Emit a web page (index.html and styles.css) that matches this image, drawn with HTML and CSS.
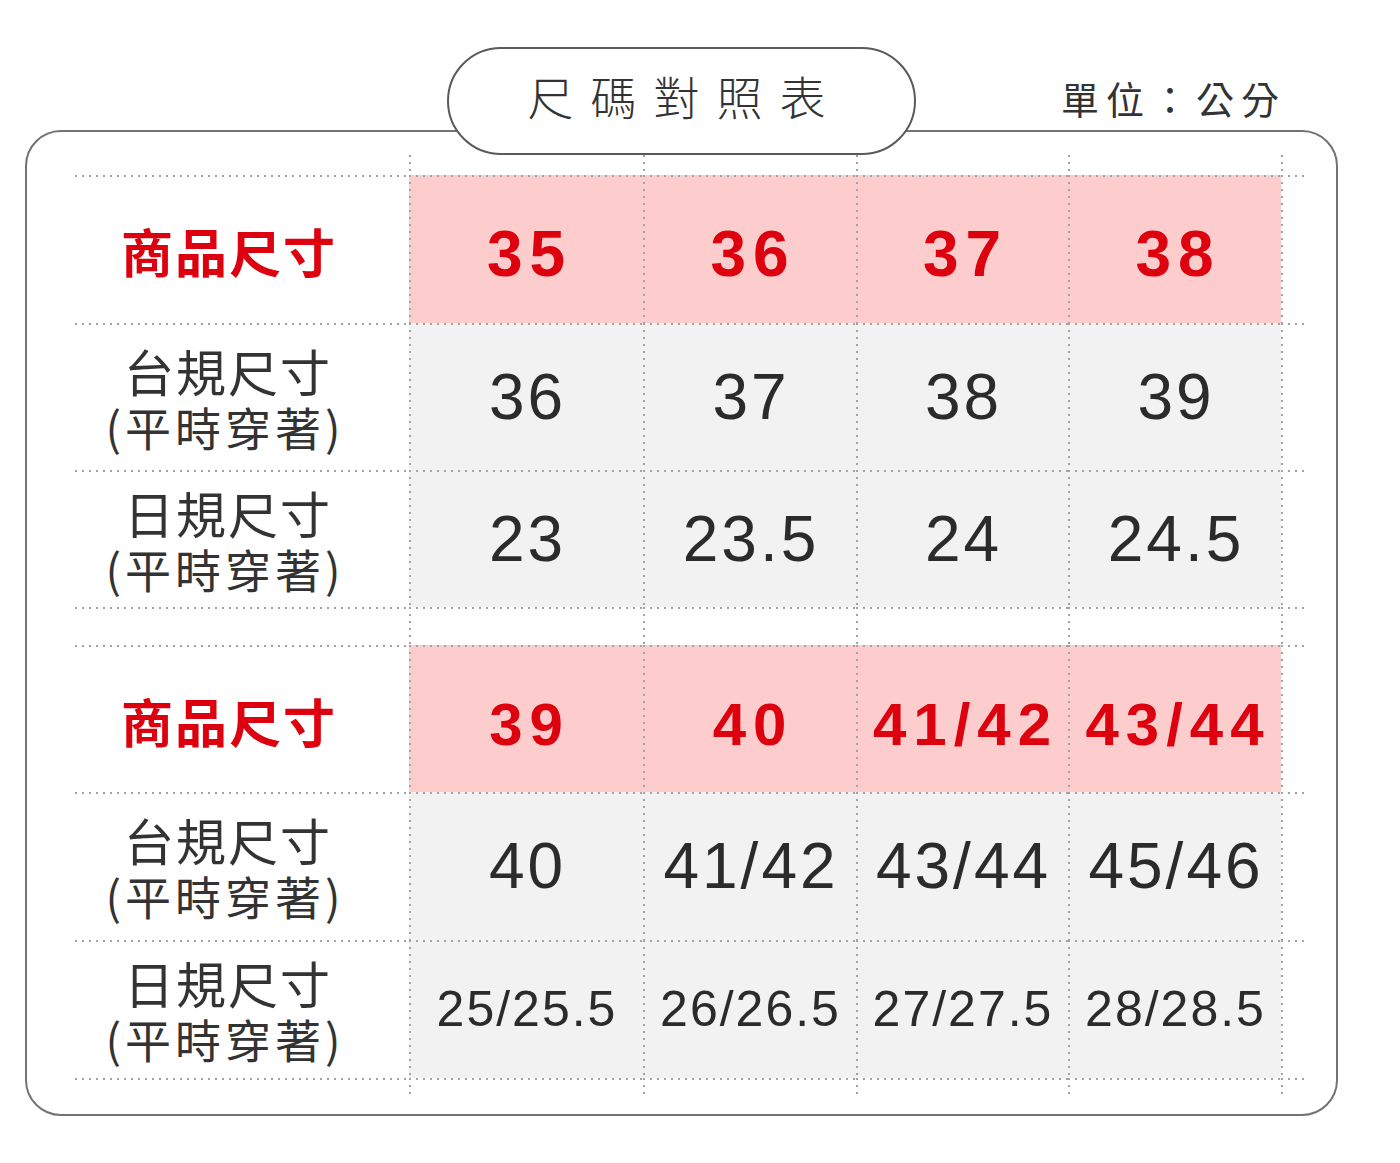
FILE: index.html
```html
<!DOCTYPE html>
<html lang="zh-Hant">
<head>
<meta charset="utf-8">
<title>尺碼對照表</title>
<link rel="stylesheet" href="styles.css">
</head>
<body>
<div class="page">
  <div class="head">
    <div class="pill">尺碼對照表</div>
    <div class="unit">單位：公分</div>
  </div>
  <div class="card">
    <div class="grid">
      <!-- top extension -->
      <div class="c"></div>
      <div class="c ln-l"></div><div class="c ln-l"></div><div class="c ln-l"></div><div class="c ln-l"></div><div class="c ln-l"></div>

      <!-- header 1 -->
      <div class="c ln-t label"><span class="lab-red">商品尺寸</span></div>
      <div class="c ln-tl pink"><span class="num-red">35</span></div>
      <div class="c ln-tl pink"><span class="num-red">36</span></div>
      <div class="c ln-tl pink"><span class="num-red">37</span></div>
      <div class="c ln-tl pink"><span class="num-red">38</span></div>
      <div class="c ln-tl"></div>

      <!-- TW 1 -->
      <div class="c ln-t label"><span class="lab">台規尺寸</span><span class="sub">(平時穿著)</span></div>
      <div class="c ln-tl grey"><span class="num">36</span></div>
      <div class="c ln-tl grey"><span class="num">37</span></div>
      <div class="c ln-tl grey"><span class="num">38</span></div>
      <div class="c ln-tl grey"><span class="num">39</span></div>
      <div class="c ln-tl"></div>

      <!-- JP 1 -->
      <div class="c ln-t label"><span class="lab">日規尺寸</span><span class="sub">(平時穿著)</span></div>
      <div class="c ln-tl grey"><span class="num">23</span></div>
      <div class="c ln-tl grey"><span class="num">23.5</span></div>
      <div class="c ln-tl grey"><span class="num">24</span></div>
      <div class="c ln-tl grey"><span class="num">24.5</span></div>
      <div class="c ln-tl"></div>

      <!-- gap -->
      <div class="c ln-t"></div>
      <div class="c ln-tl"></div><div class="c ln-tl"></div><div class="c ln-tl"></div><div class="c ln-tl"></div><div class="c ln-tl"></div>

      <!-- header 2 -->
      <div class="c ln-t label"><span class="lab-red">商品尺寸</span></div>
      <div class="c ln-tl pink"><span class="num-red sm">39</span></div>
      <div class="c ln-tl pink"><span class="num-red sm">40</span></div>
      <div class="c ln-tl pink"><span class="num-red sm">41/42</span></div>
      <div class="c ln-tl pink"><span class="num-red sm">43/44</span></div>
      <div class="c ln-tl"></div>

      <!-- TW 2 -->
      <div class="c ln-t label"><span class="lab">台規尺寸</span><span class="sub">(平時穿著)</span></div>
      <div class="c ln-tl grey"><span class="num">40</span></div>
      <div class="c ln-tl grey"><span class="num">41/42</span></div>
      <div class="c ln-tl grey"><span class="num">43/44</span></div>
      <div class="c ln-tl grey"><span class="num">45/46</span></div>
      <div class="c ln-tl"></div>

      <!-- JP 2 -->
      <div class="c ln-t label"><span class="lab">日規尺寸</span><span class="sub">(平時穿著)</span></div>
      <div class="c ln-tl grey"><span class="num small">25/25.5</span></div>
      <div class="c ln-tl grey"><span class="num small">26/26.5</span></div>
      <div class="c ln-tl grey"><span class="num small">27/27.5</span></div>
      <div class="c ln-tl grey"><span class="num small">28/28.5</span></div>
      <div class="c ln-tl"></div>

      <!-- bottom extension -->
      <div class="c ln-t"></div>
      <div class="c ln-tl"></div><div class="c ln-tl"></div><div class="c ln-tl"></div><div class="c ln-tl"></div><div class="c ln-tl"></div>
    </div>
  </div>
</div>
</body>
</html>
```

FILE: styles.css
```css
:root {
  --dot: #a3a3a3;
  --h: linear-gradient(to right, var(--dot) 0 2px, transparent 2px);
  --v: linear-gradient(to bottom, var(--dot) 0 2px, transparent 2px);
}

* { box-sizing: border-box; }

html, body {
  margin: 0;
  padding: 0;
  background: #ffffff;
}

body {
  font-family: "Noto Sans CJK TC", "Noto Sans", sans-serif;
  color: #333333;
}

.page {
  width: 1400px;
  height: 1163px;
}

.head {
  position: relative;
  z-index: 1;
  display: flex;
  align-items: flex-start;
  padding-top: 47px;
  height: 155px;
}

.pill {
  margin-left: 447px;
  width: 469px;
  height: 108px;
  border: 2px solid #5a5a5a;
  border-radius: 56px;
  background: #ffffff;
  display: flex;
  align-items: center;
  justify-content: center;
  font-size: 46px;
  font-weight: 300;
  letter-spacing: 17px;
  text-indent: 7px;
  color: #333;
  line-height: 1;
  padding-bottom: 12px;
}

.unit {
  margin-left: 145px;
  margin-top: 31px;
  font-size: 38px;
  line-height: 40px;
  letter-spacing: 7px;
  color: #333;
}

.card {
  margin-top: -25px;
  margin-left: 25px;
  width: 1313px;
  height: 986px;
  border: 2px solid #737373;
  border-radius: 36px;
  padding: 23px 0 0 48px;
  background: #ffffff;
}

.grid {
  display: grid;
  grid-template-columns: 334px 234px 213px 212px 213px 24px;
  grid-template-rows: 20px 148px 147px 137px 38px 147px 148px 138px 19px;
}

.c {
  display: flex;
  flex-direction: column;
  align-items: center;
  justify-content: center;
  white-space: nowrap;
}

.label {
  padding-right: 28px;
}

.ln-t { background: var(--h) 0 0 / 7px 2px repeat-x; }
.ln-l { background: var(--v) 0 0 / 2px 7px repeat-y; }
.ln-tl {
  background: var(--h) 0 0 / 7px 2px repeat-x, var(--v) 0 0 / 2px 7px repeat-y;
}

.pink { background-color: #fdcccc; }
.grey { background-color: #f2f2f2; }

.lab-red {
  color: #dd000e;
  font-weight: 700;
  font-size: 52px;
  letter-spacing: 2px;
  text-indent: 2px;
  line-height: 1;
  margin-top: 4px;
}

.lab {
  font-size: 50px;
  line-height: 54px;
  height: 54px;
  letter-spacing: 2px;
  color: #333;
  margin-bottom: 4px;
}

.sub {
  font-size: 46px;
  line-height: 50px;
  height: 50px;
  letter-spacing: 4px;
  color: #333;
  margin-left: -6px;
}

.num-red {
  font-family: "Liberation Sans", Arial, sans-serif;
  color: #dd000e;
  font-weight: 700;
  font-size: 64px;
  letter-spacing: 7px;
  text-indent: 7px;
  line-height: 1;
  margin-top: 10px;
}

.num-red.sm {
  font-size: 60px;
  letter-spacing: 7px;
  text-indent: 7px;
  margin-top: 12px;
}

.num {
  font-family: "Liberation Sans", Arial, sans-serif;
  color: #2b2b2b;
  font-size: 64px;
  letter-spacing: 3px;
  text-indent: 3px;
  line-height: 1;
}

.num.small {
  font-size: 50px;
  letter-spacing: 2px;
  text-indent: 2px;
}
```
